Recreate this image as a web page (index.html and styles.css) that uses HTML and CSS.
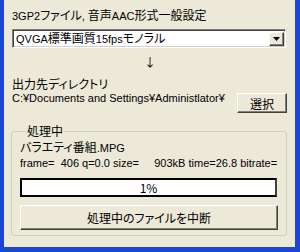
FILE: index.html
```html
<!DOCTYPE html>
<html lang="ja">
<head>
    <meta charset="UTF-8">
    <title>3GP2 変換</title>
    <link rel="stylesheet" href="styles.css">
</head>
<body>
    <div class="window">
        <div class="label"><span class="en">3GP2</span>ファイル<span class="en">, </span>音声<span class="en">AAC</span>形式一般設定</div>
        <div class="combo">
            <span class="combo-text"><span class="en">QVGA</span>標準画質<span class="en">15fps</span>モノラル</span>
            <span class="combo-btn">
                <svg width="7" height="4" viewBox="0 0 7 4"><polygon points="0,0 7,0 3.5,4" fill="#000"/></svg>
            </span>
        </div>
        <div class="down-arrow">↓</div>
        <div class="label dir-label">出力先ディレクトリ</div>
        <div class="dir-row">
            <div class="dir-path">C:¥Documents and Settings¥Administlator¥</div>
            <button class="btn select-btn">選択</button>
        </div>

        <fieldset class="group">
            <legend>処理中</legend>
            <div class="file-name">バラエティ番組<span class="en">.MPG</span></div>
            <div class="status">frame=  406 q=0.0 size=     903kB time=26.8 bitrate=</div>
            <div class="progress">1%</div>
            <button class="btn cancel-btn">処理中のファイルを中断</button>
        </fieldset>
    </div>
</body>
</html>
```

FILE: styles.css
```css
html, body {
    margin: 0;
    padding: 0;
}
body {
    width: 300px;
    height: 252px;
    overflow: hidden;
    font-family: "Noto Sans CJK JP", "Noto Sans", sans-serif;
    font-size: 12px;
    font-feature-settings: "palt";
    color: #000;
}
.en {
    font-family: "Liberation Sans", "Noto Sans CJK JP", sans-serif;
    font-size: 11px;
}
.window {
    box-sizing: border-box;
    width: 300px;
    height: 252px;
    background-color: #ece9d8;
    border-left: 4px solid #1c46d4;
    border-right: 5px solid #1c46d4;
    border-bottom: 5px solid #1c46d4;
    padding: 8px 8px 0 8px;
}
.label {
    line-height: 14px;
    height: 14px;
}
.combo {
    box-sizing: border-box;
    display: flex;
    align-items: center;
    margin-top: 7px;
    width: 274px;
    height: 19px;
    background: #fff;
    border-top: 1px solid #808080;
    border-left: 1px solid #808080;
    border-right: 1px solid #fff;
    border-bottom: 1px solid #fff;
    box-shadow: inset 1px 1px 0 #404040, inset -1px -1px 0 #d4d0c8;
}
.combo-text {
    flex: 1;
    padding-left: 3px;
    line-height: 15px;
}
.combo-btn {
    box-sizing: border-box;
    display: flex;
    align-items: center;
    justify-content: center;
    width: 15px;
    height: 14px;
    margin-right: 1px;
    background: #ece9d8;
    border-top: 1px solid #fff;
    border-left: 1px solid #fff;
    border-right: 1px solid #404040;
    border-bottom: 1px solid #404040;
    box-shadow: inset -1px -1px 0 #808080;
}
.down-arrow {
    text-align: center;
    margin-top: 6px;
    height: 20px;
    line-height: 16px;
    padding-left: 1px;
}
.dir-label {
    margin-top: 3px;
}
.dir-row {
    display: flex;
    align-items: flex-start;
    margin-top: 2px;
}
.dir-path {
    width: 221px;
    overflow: hidden;
    white-space: nowrap;
    line-height: 14px;
    margin-top: -2px;
    font-family: "Liberation Sans", "Noto Sans CJK JP", sans-serif;
    font-size: 11px;
}
.btn {
    box-sizing: border-box;
    font-family: inherit;
    font-size: 12px;
    font-feature-settings: "palt";
    color: #000;
    background: #ece9d8;
    border-top: 1px solid #fff;
    border-left: 1px solid #fff;
    border-right: 1px solid #404040;
    border-bottom: 1px solid #404040;
    box-shadow: inset -1px -1px 0 #808080;
    padding: 0;
    margin: 0;
}
.select-btn {
    width: 50px;
    height: 20px;
    margin-left: auto;
}
.group {
    box-sizing: border-box;
    width: 273px;
    margin: 11px 0 0 -1px;
    padding: 0 7px 5px 8px;
    border: 1px solid #d0d0bf;
    border-radius: 3px;
}
.group legend {
    padding: 0 1px;
    margin-left: 6px;
    line-height: 14px;
}
.file-name {
    line-height: 14px;
    margin-top: 2px;
}
.status {
    white-space: pre;
    overflow: hidden;
    line-height: 14px;
    margin-top: 1px;
    width: 259px;
    font-family: "Liberation Sans", sans-serif;
    font-size: 11px;
}
.progress {
    box-sizing: border-box;
    height: 19px;
    width: 257px;
    margin-top: 8px;
    background: #fff;
    border: 2px solid #000;
    border-right-color: #404040;
    text-align: center;
    line-height: 15px;
}
.cancel-btn {
    display: block;
    width: 258px;
    height: 25px;
    margin-top: 8px;
}
```
